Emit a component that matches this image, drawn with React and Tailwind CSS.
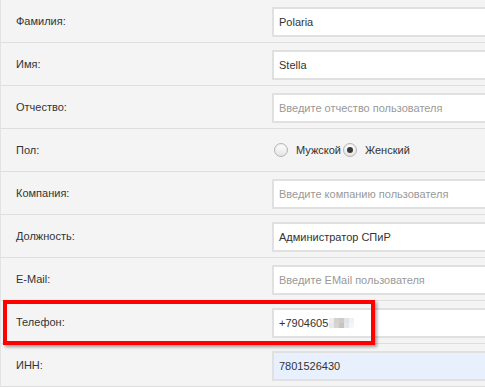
import React from "react";

const rows = [
  { label: "Фамилия:", value: "Polaria" },
  { label: "Имя:", value: "Stella" },
  { label: "Отчество:", placeholder: "Введите отчество пользователя" },
  { label: "Пол:", radio: true },
  { label: "Компания:", placeholder: "Введите компанию пользователя" },
  { label: "Должность:", value: "Администратор СПиР" },
  { label: "E-Mail:", placeholder: "Введите EMail пользователя" },
  { label: "Телефон:", phone: true },
  { label: "ИНН:", value: "7801526430", autofill: true },
];

function Radio({ checked }) {
  return (
    <span className="flex h-[14px] w-[14px] items-center justify-center rounded-full border border-[#b5b5b5] bg-gradient-to-b from-[#ffffff] to-[#e4e4e4] shadow-[inset_0_1px_1px_rgba(0,0,0,0.08)]">
      {checked && <span className="h-[6px] w-[6px] rounded-full bg-[#3a3a3a]" />}
    </span>
  );
}

const blur = [
  ["#eeeeee", "#d2d2d2", "#cfcac4", "#dfe4ea", "#eef2f6"],
  ["#e9e9e9", "#d9d4cf", "#c8c3be", "#e3e8ed", "#f3f6f9"],
];

export default function App() {
  return (
    <div className="relative h-[388px] w-[485px] overflow-hidden bg-white" style={{ fontFamily: '"Liberation Sans", Arial, sans-serif' }}>
      <div className="border-l border-[#e2e2e2]">
        {rows.map((r, i) => (
          <div key={i} className="flex h-[43px] items-start border-b border-[#dedede] bg-[#f4f4f4]">
            <div className="flex h-[42px] w-[271px] shrink-0 items-center pl-[15px] text-[11px] text-[#333]">
              {r.label}
            </div>
            {r.radio ? (
              <div className="flex h-[42px] items-center text-[11px] text-[#333]">
                <span className="ml-[2px]"><Radio /></span>
                <span className="ml-[8px]">Мужской</span>
                <span className="ml-[2px]"><Radio checked /></span>
                <span className="ml-[8px]">Женский</span>
              </div>
            ) : (
              <div
                className={`mt-[7px] flex h-[30px] w-[240px] shrink-0 items-center border-2 border-[#e0e0e0] pl-[5px] text-[11px] ${
                  r.autofill ? "bg-[#e8f0fe]" : "bg-white"
                } ${r.placeholder ? "text-[#999]" : "text-[#333]"}`}
              >
                {r.phone ? (
                  <span className="flex items-center">
                    +7904605
                    <span className="ml-[1px] flex flex-col">
                      {blur.map((row, ri) => (
                        <span key={ri} className="flex">
                          {row.map((c, ci) => (
                            <span key={ci} className="h-[5px] w-[5px]" style={{ background: c }} />
                          ))}
                        </span>
                      ))}
                    </span>
                  </span>
                ) : (
                  r.value || r.placeholder
                )}
              </div>
            )}
          </div>
        ))}
      </div>
      <div className="pointer-events-none absolute left-[3px] top-[300px] h-[45px] w-[372px] border-[4px] border-[#ff0000] shadow-[2px_2px_3px_rgba(0,0,0,0.35)]" />
    </div>
  );
}
